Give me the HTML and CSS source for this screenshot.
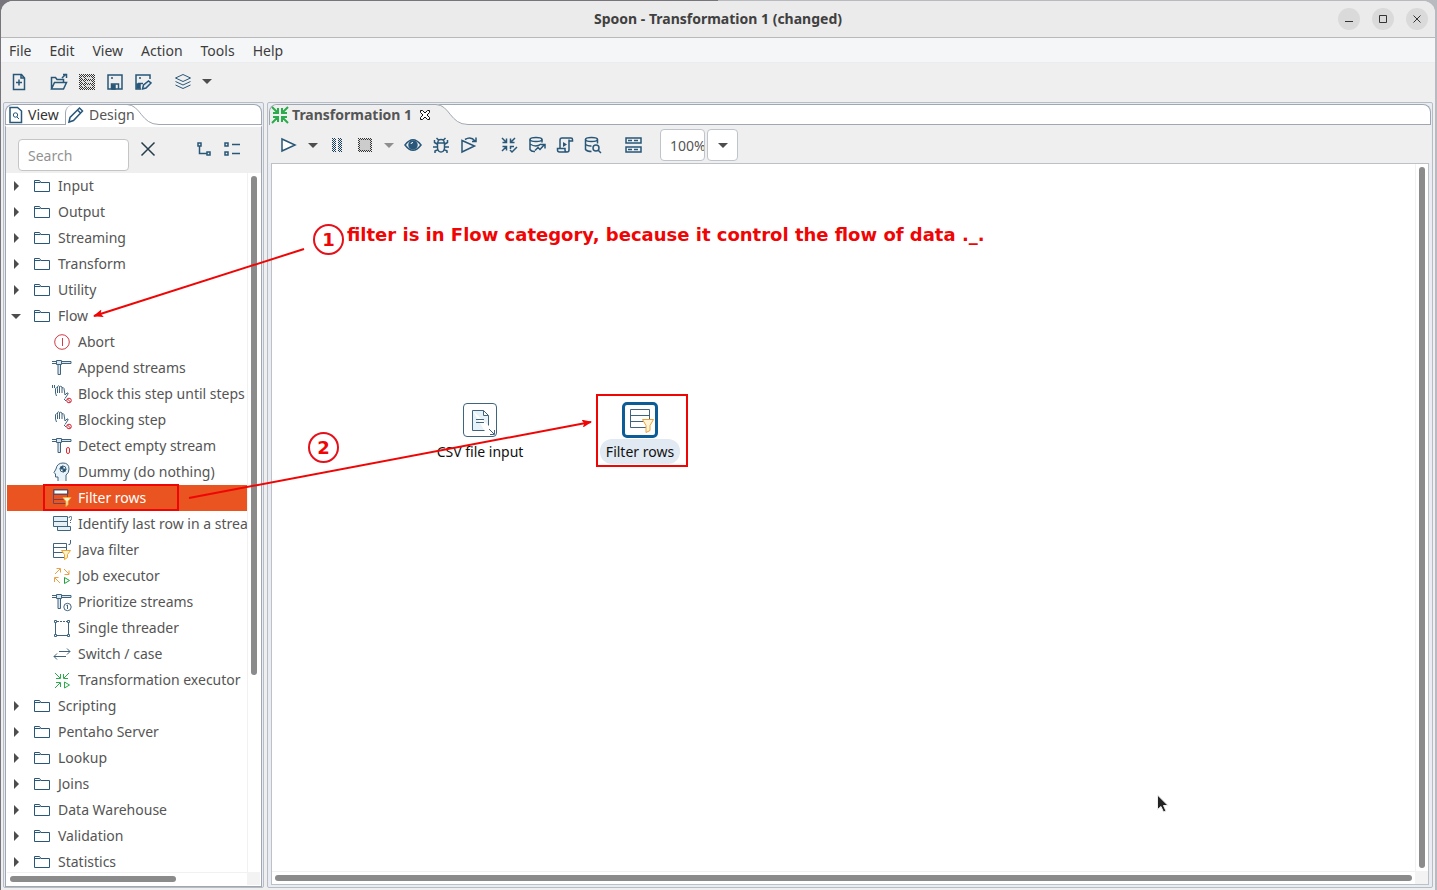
FILE: index.html
```html
<!DOCTYPE html>
<html lang="en">
<head>
<meta charset="utf-8">
<title>Spoon - Transformation 1 (changed)</title>
<link rel="stylesheet" href="styles.css">
</head>
<body>
<svg class="sprite" aria-hidden="true">
  <defs>
    <pattern id="dither" width="2" height="2" patternUnits="userSpaceOnUse"><path d="M0 0h1v1H0zM1 1h1v1H1z" fill="#333" stroke="none"/></pattern>
    <pattern id="dither-blue" width="2" height="2" patternUnits="userSpaceOnUse"><path d="M0 0h1v1H0zM1 1h1v1H1z" fill="#173f5c" stroke="none"/></pattern>
    <marker id="head" viewBox="0 0 10 8" refX="9" refY="4" markerWidth="10" markerHeight="8" markerUnits="userSpaceOnUse" orient="auto"><path d="M0 0L10 4L0 8L2 4z" fill="#f00505" stroke="none"/></marker>
  </defs>
  <symbol id="folder" viewBox="0 0 18 14"><path d="M1.500 12.500v-11h5l1.500 2h8.500v9zM1.500 3.500h6" /></symbol>
  <symbol id="abort" viewBox="0 0 20 20"><g stroke="#cf3b46"><circle cx="10" cy="10" r="7.300"/><path d="M10.500 6v8"/></g></symbol>
  <symbol id="append" viewBox="0 0 20 20"><path d="M0 3.500h4M0 5.500h4M4.500 2.500h5v4h-5zM9.500 3.500H19v2H9.500M6 6.500v10h2.500v-10" fill="#dbe7ee"/></symbol>
  <symbol id="hand" viewBox="0 0 20 20"><path d="M3.500 9V4.500q1-1.500 2 0V9M5.500 4V2.500q1-1.500 2 0V9M7.500 3q1-1.500 2.500 0V9M10 4q1.500-1 2 .5l1 6.500 2-2q1.500-.5 1 1l-3 4.500M3.500 9l1 3M12 15l2 2"/><g stroke="#d22030"><circle cx="17" cy="16.500" r="2.300"/><path d="M15.500 15l3 3"/></g></symbol>
  <symbol id="hand-wait" viewBox="0 0 20 20"><path d="M.5 1v3M2.500 1v3"/><use href="#hand"/></symbol>
  <symbol id="detect" viewBox="0 0 20 20"><use href="#append"/><rect x="14.500" y="11.500" width="3" height="6" rx="1.500" stroke="#e02b35" fill="#fff"/></symbol>
  <symbol id="dummy" viewBox="0 0 20 20"><path d="M6 19v-4H3.500v-3L2 10.500 4 7Q5 1 11 1t6 6q0 4-3 6v6" fill="#e8f4fa"/><circle cx="11" cy="7" r="3" fill="#fff"/><path d="M11 7V4a3 3 0 0 0-3 3zM11 7v3a3 3 0 0 0 3-3z" fill="#1d4966"/></symbol>
  <symbol id="filter-on" viewBox="0 0 20 20"><path d="M2 2h14v4H2z" fill="#fff"/><path d="M1.500 1.500h14v14h-14zM1.500 6.500h14M1.500 11.500h10" stroke="#704253"/><path d="M11 9.500h8l-3 4v3l-2 2v-5z" fill="#fff4c9" stroke="#f2ab34"/></symbol>
  <symbol id="identify" viewBox="0 0 20 20"><path d="M1.500 2.500h14v5h-14zM1.500 7.500h14v5h-14zM5.500 12.500h13v4h-13z" fill="#e6f1f7"/><path d="M17 4q0-1.500 1.500-1.500T20 4t-1.500 2v1M18.500 8v1"/></symbol>
  <symbol id="java" viewBox="0 0 20 20"><path d="M1.500 3.500h13v14h-13zM1.500 7.500h13M1.500 12.500h11M18.500 0v3q0 2-2 1.500"/><path d="M9.500 10.500h9l-3 4v3l-3 2v-5z" fill="#fff3cf" stroke="#efa62f"/></symbol>
  <symbol id="job" viewBox="0 0 20 20"><path d="M3 8l5-5M4.500 2.500h4v4M12 3l5 5M12.500 8.500h4.500V4.500M8 17l-5-5M2.500 16v-4.500h4" stroke="#eba04a"/><path d="M12.500 11.500v6l5-3z" stroke="#20a13a"/></symbol>
  <symbol id="priority" viewBox="0 0 20 20"><use href="#append"/><circle cx="15.500" cy="15" r="3.700" fill="#fff"/><path d="M14.500 13.500l1-.5v4"/></symbol>
  <symbol id="threader" viewBox="0 0 20 20"><path d="M3.500 5v11M5 17.500h11M16.500 5v11"/><path d="M5 3.500h11" stroke-dasharray="2 1"/><path d="M2.500 2.500h2v2h-2zM15.500 2.500h2v2h-2zM2.500 16.500h2v2h-2zM15.500 16.500h2v2h-2z" fill="#fff"/></symbol>
  <symbol id="switch" viewBox="0 0 20 20"><path d="M7 7.500h11M15 4.500l3 3-3 3M14 12.500H2M5 9.500l-3 3 3 3"/></symbol>
  <symbol id="executor" viewBox="0 0 20 20"><g stroke="#2bab4b"><path d="M3 3l5 5M8.500 4v4.500H4M17 3l-5 5M11.500 4v4.500H16M3 18l5-5M4 12.500h4.500V17"/><path d="M12.500 12v6l5-3z"/></g></symbol>
  <symbol id="page" viewBox="0 0 18 18"><path d="M3 1.500h7.500L14.500 5v11.500H3z"/></symbol>
</svg>

<div class="window">
  <header class="titlebar">
    <h1 class="title">Spoon - Transformation 1 (changed)</h1>
    <div class="controls">
      <button class="round" aria-label="Minimize"><svg width="20" height="20"><path d="M6 12.500h8" stroke="#333"/></svg></button>
      <button class="round" aria-label="Maximize"><svg width="20" height="20"><path d="M6.500 6.500h7v7h-7z" stroke="#333"/></svg></button>
      <button class="round" aria-label="Close"><svg width="20" height="20"><path d="M6.500 6.500l7 7M13.500 6.500l-7 7" stroke="#333"/></svg></button>
    </div>
  </header>
  <nav class="menubar">
    <button class="menu">File</button><button class="menu">Edit</button><button class="menu">View</button><button class="menu">Action</button><button class="menu">Tools</button><button class="menu">Help</button>
  </nav>
  <div class="toolbar">
    <button class="tool gap-after" aria-label="New"><svg class="heavy" width="18" height="18"><path d="M3.500 1.500h8l3 3.500v11.500h-11zM11 1.500V5h3.500M9 6.500v6M6 9.500h6"/></svg></button>
    <button class="tool" aria-label="Open"><svg class="heavy" width="18" height="18"><path d="M1.500 16V4.500h4l1.500 2h6.500v3M1.500 16l3-6.500h12l-3 6.500zM12 5l4-4M13 1.500h3.500V5"/></svg></button>
    <button class="tool" aria-label="Explore repository" disabled><svg width="18" height="18"><path d="M1 1h16v16H1z" fill="url(#dither)" stroke="none"/><path d="M4 4h2v2H4zM8 4h6v2H8zM4 8h2v2H4zM8 8h6v2H8zM4 12h2v2H4zM8 12h6v2H8z" fill="#d8d8d8" stroke="none"/></svg></button>
    <button class="tool" aria-label="Save"><svg class="heavy" width="18" height="18"><path d="M2 2h14v14H2zM5.500 16v-5h7v5M5 5h2"/><path d="M6 12h3v4H6z" fill="#285779"/></svg></button>
    <button class="tool" aria-label="Save as"><svg class="heavy" width="18" height="18"><path d="M7 16H2V2h14v4M4 10.500h5M5 5h2"/><path d="M3 11h3v4H3z" fill="#285779"/><path d="M8.500 16l1-4 5-4 2.500 2-5 5z" fill="#dce7ee"/></svg></button>
    <button class="tool layers" aria-label="Perspective"><svg width="20" height="18"><path d="M10 1.500l7.500 3.500-7.500 3.500L2.500 5zM2.500 8.500L10 12l7.500-3.500M2.500 12L10 15.500l7.500-3.500" stroke="#285779"/></svg></button>
    <button class="caret" aria-label="Choose perspective"></button>
  </div>

  <main class="workspace">
    <section class="panel side">
      <div class="tabs">
        <button class="tab first"><svg class="heavy" width="18" height="18"><use href="#page"/><circle cx="8.500" cy="9" r="2.200" stroke-width="1"/><path d="M10 11l2 2" stroke-width="1"/></svg>View</button>
        <button class="tab design"><svg class="heavy" width="18" height="18"><path d="M2 16l1-4.500L12.500 2l3 3L6.500 14.500zM10.500 4l3 3"/></svg>Design</button>
        <svg class="curve" width="32" height="21"><path d="M0 .5C14 1 14 20.500 32 20.500"/></svg>
        <span class="rest"></span>
      </div>
      <div class="searchbar">
        <input class="search" type="text" placeholder="Search" aria-label="Search">
        <button class="clear" aria-label="Clear"><svg width="16" height="16"><path d="M1.500 1.500l13 13M14.500 1.500l-13 13" stroke="#263e4c" stroke-width="1.500"/></svg></button>
        <button class="tool tight" aria-label="Expand all"><svg class="heavy" width="18" height="18"><path d="M3 3h3v3H3zM12 12h3v3h-3zM4.500 6v7.500H12"/></svg></button>
        <button class="tool tight" aria-label="Collapse all"><svg class="heavy" width="18" height="18"><path d="M2 3h3v3H2zM2 12h3v3H2zM9 4.500h8M9 13.500h8"/></svg></button>
      </div>
      <div class="scrollgrid">
        <ul class="tree">
          <li class="row"><i class="twist"></i><svg class="dir"><use href="#folder"/></svg>Input</li>
          <li class="row"><i class="twist"></i><svg class="dir"><use href="#folder"/></svg>Output</li>
          <li class="row"><i class="twist"></i><svg class="dir"><use href="#folder"/></svg>Streaming</li>
          <li class="row"><i class="twist"></i><svg class="dir"><use href="#folder"/></svg>Transform</li>
          <li class="row"><i class="twist"></i><svg class="dir"><use href="#folder"/></svg>Utility</li>
          <li class="row"><i class="twist open"></i><svg class="dir"><use href="#folder"/></svg>Flow</li>
          <li class="row leaf"><svg class="step"><use href="#abort"/></svg>Abort</li>
          <li class="row leaf"><svg class="step"><use href="#append"/></svg>Append streams</li>
          <li class="row leaf"><svg class="step"><use href="#hand-wait"/></svg>Block this step until steps</li>
          <li class="row leaf"><svg class="step"><use href="#hand"/></svg>Blocking step</li>
          <li class="row leaf"><svg class="step"><use href="#detect"/></svg>Detect empty stream</li>
          <li class="row leaf"><svg class="step"><use href="#dummy"/></svg>Dummy (do nothing)</li>
          <li class="row leaf selected"><svg class="step"><use href="#filter-on"/></svg>Filter rows</li>
          <li class="row leaf"><svg class="step"><use href="#identify"/></svg>Identify last row in a strea</li>
          <li class="row leaf"><svg class="step"><use href="#java"/></svg>Java filter</li>
          <li class="row leaf"><svg class="step"><use href="#job"/></svg>Job executor</li>
          <li class="row leaf"><svg class="step"><use href="#priority"/></svg>Prioritize streams</li>
          <li class="row leaf"><svg class="step"><use href="#threader"/></svg>Single threader</li>
          <li class="row leaf"><svg class="step"><use href="#switch"/></svg>Switch / case</li>
          <li class="row leaf"><svg class="step"><use href="#executor"/></svg>Transformation executor</li>
          <li class="row"><i class="twist"></i><svg class="dir"><use href="#folder"/></svg>Scripting</li>
          <li class="row"><i class="twist"></i><svg class="dir"><use href="#folder"/></svg>Pentaho Server</li>
          <li class="row"><i class="twist"></i><svg class="dir"><use href="#folder"/></svg>Lookup</li>
          <li class="row"><i class="twist"></i><svg class="dir"><use href="#folder"/></svg>Joins</li>
          <li class="row"><i class="twist"></i><svg class="dir"><use href="#folder"/></svg>Data Warehouse</li>
          <li class="row"><i class="twist"></i><svg class="dir"><use href="#folder"/></svg>Validation</li>
          <li class="row"><i class="twist"></i><svg class="dir"><use href="#folder"/></svg>Statistics</li>
        </ul>
        <div class="vbar"><span class="thumb part"></span></div>
        <div class="hbar"><span class="thumb part"></span></div>
        <div class="corner"></div>
      </div>
    </section>

    <section class="panel editor">
      <div class="tabs">
        <button class="tab active"><svg width="18" height="18"><path d="M1 1l5.500 5.500M7 2v5H2M17 1l-5.500 5.500M11 2v5h5M1 17l5.500-5.500M2 11h5v5M17 17l-5.500-5.500M16 11h-5v5" stroke="#2cab4a" stroke-width="2"/></svg>Transformation 1<svg class="x" width="12" height="12"><path d="M1.500 1.500h2L6 4l2.500-2.500h2v2L8 6l2.500 2.500v2h-2L6 8l-2.500 2.500h-2v-2L4 6 1.500 3.500z" stroke="#111" fill="#fff"/></svg></button>
        <svg class="curve" width="32" height="21"><path class="fill" d="M0 0C14 1 14 20.500 32 21H0z"/><path d="M0 .5C14 1 14 20.500 32 20.500"/></svg>
        <span class="rest"></span>
      </div>
      <div class="runbar">
        <button class="tool" aria-label="Run"><svg class="heavy" width="18" height="18"><path d="M2 3v12l13-6z" fill="#fff"/></svg></button>
        <button class="caret" aria-label="Run options"></button>
        <button class="tool" aria-label="Pause" disabled><svg width="18" height="18"><path d="M4 2h4v14H4zM10 2h4v14h-4z" fill="url(#dither-blue)" stroke="none"/></svg></button>
        <button class="tool" aria-label="Stop" disabled><svg width="18" height="18"><path d="M3 3h12v12H3z" fill="#ccc" stroke="none"/><path d="M2 2h14v14H2zM4 4v10h10V4z" fill="url(#dither)" fill-rule="evenodd" stroke="none"/></svg></button>
        <button class="caret dim" aria-label="Stop options" disabled></button>
        <button class="tool" aria-label="Preview"><svg class="heavy" width="18" height="18"><path d="M1 9q8-10.500 16 0-8 10.500-16 0z"/><circle cx="9" cy="9" r="4" fill="#285779"/><path d="M7 8q0-1.500 2-1.500" stroke="#fff" stroke-width="1"/></svg></button>
        <button class="tool" aria-label="Debug"><svg class="heavy" width="18" height="18"><path d="M5.500 7h7v5q-.5 4-3.500 4t-3.500-4zM6 7q-.5-3.500 3-3.500T12 7M6.500 4L4.500 2M11.500 4l2-2M5 8L2.500 6.500V4M13 8l2.500-1.500V4M5 11H1M13 11h4M6 13.500L3 15v2M12 13.500l3 1.500v2"/></svg></button>
        <button class="tool wide" aria-label="Replay"><svg class="heavy" width="18" height="18"><path d="M2 4.500v11.500L14.500 10zM5 3.500q6-3.500 10 1.500M16 1.500V5.500H12"/></svg></button>
        <button class="tool" aria-label="Verify"><svg class="heavy" width="18" height="18"><path d="M2 2l4 4M6.500 2.500v4h-4M15 2l-4 4M10.500 2.500v4h4M2 15l4-4M2.500 10.500h4v4M14 10.500h-3.500V13M10 14l2 2 5-5"/></svg></button>
        <button class="tool" aria-label="Impact"><svg class="heavy" width="18" height="18"><ellipse cx="8" cy="3.500" rx="6" ry="2"/><path d="M2 3.500v10q1.500 2.500 5 2M14 3.500v3M2 8q6 4 11 0M7 14.500l3-3 2 2 4.500-5M13 8.500h4v4"/></svg></button>
        <button class="tool" aria-label="SQL"><svg class="heavy" width="18" height="18"><path d="M4 12.500V4q0-2 2-2h9q1.500 0 1.500 1.500V5H13v9q0 2-2 2H3.500q-2 0-2-2v-1.500H9V14q0 2 2 2M13 5V3.500"/><path d="M7 6v5l4-2.500z" fill="#285779" stroke="none"/></svg></button>
        <button class="tool wide" aria-label="Explore database"><svg class="heavy" width="18" height="18"><ellipse cx="7.500" cy="3.500" rx="6" ry="2"/><path d="M1.500 3.500v10q1.500 2 6 2M13.500 3.500v4M1.500 8.500q3 2 6 1.500"/><circle cx="12" cy="12" r="3"/><path d="M14 14l3 3"/></svg></button>
        <button class="tool wide" aria-label="Show results"><svg class="heavy" width="18" height="18"><path d="M2 2h15v5H2zM2 11h15v5H2zM4 4.500h4M10 4.500h4M4 13.500h4M10 13.500h4"/></svg></button>
        <input class="zoom" type="text" value="100%" aria-label="Zoom">
        <button class="zoomdrop" aria-label="Zoom levels"><i class="down"></i></button>
      </div>
      <div class="scrollgrid framed">
        <div class="canvas">
          <div class="node csv"><span class="box"><svg width="34" height="34"><path d="M8.500 6.500h11l5 5v10M8.500 6.500v20h12M19.500 6.500v5h5" fill="#e7f2f8"/><path d="M12 15.500h8M12 18.500h8M25 25l5 5M30.500 26v4.500H26" stroke="#3f6580"/></svg></span><span class="name">CSV file input</span></div>
          <div class="node rows"><span class="box picked"><svg width="30" height="30"><path d="M5.500 4.500h19v18h-19zM5.500 10.500h19M5.500 16.500h19"/><path d="M17.500 14.500h11l-3.500 6v5l-4 2v-7z" fill="#fff3d6" stroke="#e9a33b"/></svg></span><span class="name">Filter rows</span></div>
        </div>
        <div class="vbar"><span class="thumb"></span></div>
        <div class="hbar"><span class="thumb"></span></div>
        <div class="corner"></div>
      </div>
    </section>
  </main>
</div>

<div class="notes">
  <svg class="ink" width="100%" height="100%">
    <path d="M304 249L94 316" marker-end="url(#head)"/>
    <path d="M189 498L591 422" marker-end="url(#head)"/>
    <rect x="44" y="485" width="134" height="25"/>
    <rect x="597" y="395" width="90" height="71"/>
  </svg>
  <span class="badge one">1</span>
  <span class="badge two">2</span>
  <p class="remark">filter is in Flow category, because it control the flow of data ._.</p>
  <svg class="pointer" width="14" height="20"><path d="M1.500 1v14.500L5 12.500l2.500 5.500 2.500-1-2.500-5.500H12z"/></svg>
</div>
</body>
</html>
```

FILE: styles.css
```css
* { box-sizing: border-box; }
body {
  margin: 0;
  height: 100vh;
  overflow: hidden;
  position: relative;
  padding: 1px 2px 0 1px;
  background: linear-gradient(90deg, #77747c 50%, #b9babf 50%);
  font: 14px/20px "Noto Sans", "Open Sans", sans-serif;
  color: #555;
}
button, input { font: inherit; color: inherit; margin: 0; }
button { border: 0; padding: 0; background: none; }
svg { fill: none; stroke: #41647e; flex: none; display: block; }
.heavy { stroke: #285779; stroke-width: 1.5; }
.sprite { position: absolute; width: 0; height: 0; }

.window { height: 100%; display: flex; flex-direction: column; background: #efefef; border-radius: 12px 12px 0 0; overflow: hidden; }
.titlebar { height: 37px; flex: none; display: grid; grid-template-columns: 1fr auto 1fr; align-items: center; background: #ebebeb; border-bottom: 1px solid #b9b9b9; }
.title { grid-column: 2; margin: 0; font-size: 14px; font-weight: 700; color: #404040; }
.controls { display: flex; justify-content: flex-end; gap: 12px; padding-right: 7px; }
.round { width: 22px; height: 22px; border-radius: 50%; background: #dadada; display: grid; place-items: center; }
.menubar { height: 25px; flex: none; display: flex; gap: 18px; padding: 2px 8px 0; background: #f5f6f8; border-bottom: 1px solid #ebecee; color: #3d3d3d; }
.toolbar { height: 39px; flex: none; display: flex; align-items: center; padding: 0 0 2px 4px; }
.tool { width: 28px; height: 28px; flex: none; display: grid; place-items: center; }
.gap-after { margin-right: 12px; }
.layers { margin-left: 12px; }
.caret { width: 20px; height: 28px; flex: none; display: grid; place-items: center; }
.caret::before, .down { content: ""; border: 5px solid transparent; border-top-color: #4d4d4d; border-bottom: 0; }
.dim { opacity: .6; }

.workspace { flex: 1; min-height: 0; display: flex; gap: 3px; padding: 0 2px 2px; }
.panel { display: flex; flex-direction: column; min-height: 0; min-width: 0; border: 1px solid #b6bdc5; border-radius: 2px; padding: 1px 1px 0; background: #e9edf3; }
.side { width: 261px; flex: none; }
.editor { flex: 1; }
.tabs { height: 21px; flex: none; display: flex; background: #fff; border-top: 1px solid #a0a7b0; border-left: 1px solid #a0a7b0; border-right: 1px solid #a0a7b0; border-radius: 8px 8px 0 0; }
.tab { display: flex; align-items: center; white-space: nowrap; }
.first { width: 59px; gap: 3px; padding-left: 1px; color: #333; border-bottom: 1px solid #a0a7b0; }
.design { width: 62px; gap: 4px; padding-left: 1px; border-left: 1px solid #a0a7b0; border-radius: 8px 0 0; }
.curve { margin-top: -1px; stroke: #a0a7b0; }
.fill { fill: #efefef; stroke: none; }
.rest { flex: 1; border-bottom: 1px solid #a0a7b0; }
.searchbar { height: 48px; flex: none; display: flex; align-items: flex-start; padding: 8px 15px 0 12px; background: #efefef; border-top: 2px solid #fff; border-left: 1px solid #a0a7b0; border-right: 1px solid #a0a7b0; }
.search { width: 111px; height: 32px; margin-top: 4px; padding: 0 9px; border: 1px solid #c5c5c5; border-radius: 4px; background: #fff; }
.search::placeholder { color: #929292; opacity: 1; }
.clear { width: 38px; height: 28px; display: grid; place-items: center; }
.tight { margin-left: auto; }
.tight + .tight { margin-left: 0; }

.scrollgrid { flex: 1; min-height: 0; display: grid; grid-template: minmax(0, 1fr) 13px / minmax(0, 1fr) 13px; background: #fff; border: solid #a0a7b0; border-width: 0 1px 1px; }
.side .scrollgrid { padding: 0 1px 1px; }
.framed { margin: 0 2px 2px; border: 1px solid #bcc1c7; }
.tree { margin: 0; padding: 0; list-style: none; overflow: hidden; }
.row { height: 26px; display: flex; align-items: center; padding-left: 4px; white-space: nowrap; overflow: hidden; }
.leaf { padding-left: 45px; gap: 6px; }
.selected { background: #e95420; color: #fff; }
.twist { width: 10px; height: 10px; margin-right: 12px; display: grid; place-items: center; }
.twist::before { content: ""; border: 5px solid transparent; border-left-color: #4d4d4d; border-right: 0; }
.open::before { border: 5px solid transparent; border-top-color: #4d4d4d; border-bottom: 0; }
.dir { width: 18px; height: 14px; margin-right: 7px; stroke: #285779; }
.step { width: 20px; height: 20px; }
.vbar { border-left: 1px solid #f1f1f1; padding: 3px; display: flex; }
.hbar { border-top: 1px solid #f1f1f1; padding: 3px; display: flex; }
.corner { background: #f3f3f3; }
.thumb { flex: 1; background: #8b8b8b; border-radius: 3px; }
.vbar .part { height: 72%; }
.hbar .part { flex: none; width: 71%; }

.active { padding: 0 5px 0 1px; gap: 3px; background: #efefef; font-weight: 700; border-radius: 8px 0 0; }
.x { margin-left: 4px; }
.runbar { height: 38px; flex: none; display: flex; align-items: center; padding: 2px 0 0 6px; background: #efefef; }
.wide { margin-right: 12px; }
.zoom { width: 45px; height: 32px; margin-left: 1px; padding: 0 0 0 9px; border: 1px solid #bfc4ca; border-radius: 4px; background: #fff; }
.zoomdrop { width: 31px; height: 32px; margin-left: 2px; border: 1px solid #bfc4ca; border-radius: 4px; background: #fff; display: grid; place-items: center; }
.canvas { position: relative; overflow: hidden; }
.node { position: absolute; width: 100px; display: flex; flex-direction: column; align-items: center; color: #111; }
.csv { left: 158px; top: 239px; }
.rows { left: 318px; top: 238px; }
.box { width: 34px; height: 34px; display: grid; place-items: center; border: 1px solid #3e657f; border-radius: 4px; background: #fff; }
.picked { width: 36px; height: 36px; border: 3px solid #0c5d95; border-radius: 5px; }
.name { height: 25px; margin-top: 2px; padding: 1px 6px; border-radius: 12px; white-space: nowrap; line-height: 23px; }
.rows .name { margin-top: 1px; background: #e1e9f2; }

.notes { position: absolute; inset: 0; pointer-events: none; color: #f00505; font-family: "DejaVu Sans", sans-serif; }
.ink { position: absolute; inset: 0; stroke: #f00505; stroke-width: 2; }
.badge { position: absolute; width: 31px; height: 31px; border: 2px solid #e5101a; border-radius: 50%; text-align: center; font-size: 18px; line-height: 27px; font-weight: 700; }
.one { left: 313px; top: 224px; }
.two { left: 308px; top: 432px; }
.remark { position: absolute; left: 347px; top: 222px; margin: 0; font-size: 18px; line-height: 26px; font-weight: 700; white-space: nowrap; }
.pointer { position: absolute; left: 1156px; top: 794px; fill: #222; stroke: #eee; }
```
